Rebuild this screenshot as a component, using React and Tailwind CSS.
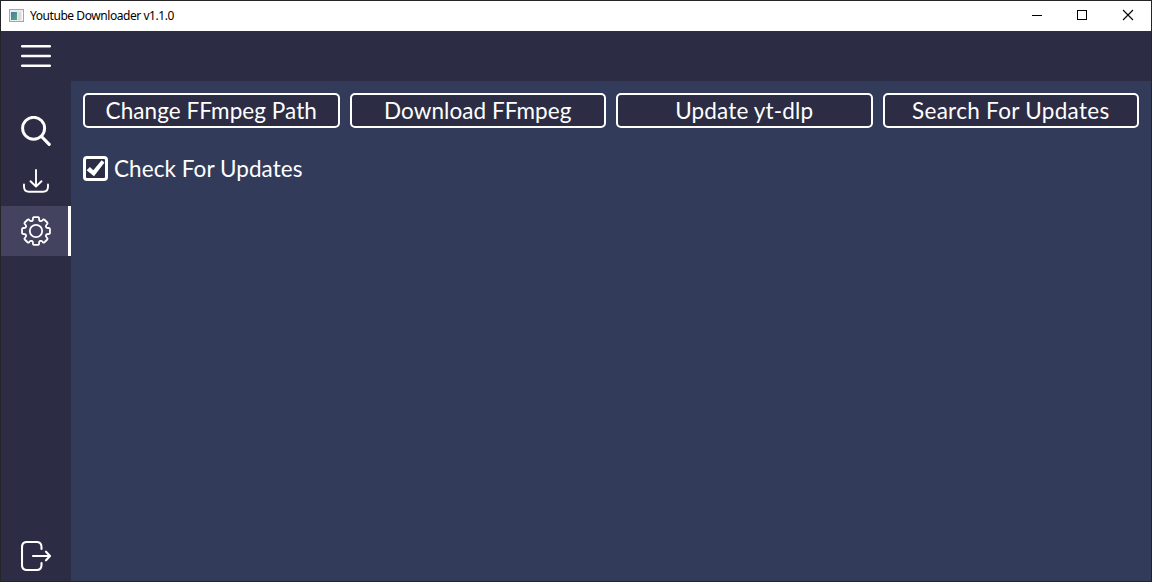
import React from "react";

const polar = (r, deg) => {
  const a = (deg * Math.PI) / 180;
  return `${(15 + r * Math.sin(a)).toFixed(2)} ${(15 - r * Math.cos(a)).toFixed(2)}`;
};

const gearPath =
  `M${polar(14.1, -8)}` +
  Array.from({ length: 8 }, (_, i) => {
    const d = i * 45;
    return `L${polar(14.1, d + 8)}Q${polar(14.2, d + 13)} ${polar(12.8, d + 13.5)}C${polar(10.2, d + 16)} ${polar(10.2, d + 29)} ${polar(12.8, d + 31.5)}Q${polar(14.2, d + 32)} ${polar(14.1, d + 37)}`;
  }).join("") +
  "Z";

function Icon({ children, width = 2 }) {
  return (
    <svg width="30" height="30" viewBox="0 0 30 30" fill="none" stroke="white" strokeWidth={width} strokeLinecap="round" strokeLinejoin="round" className="shrink-0">
      {children}
    </svg>
  );
}

function NavItem({ active, children }) {
  return (
    <button className={`flex h-[50px] w-[70px] shrink-0 items-center justify-center ${active ? "border-r-3 border-white bg-[#434360] pl-[3px]" : ""}`}>
      {children}
    </button>
  );
}

function TitleBar() {
  return (
    <header className="flex h-[30px] shrink-0 items-center bg-white text-black">
      <svg width="16" height="14" viewBox="0 0 16 14" className="ml-2 shrink-0">
        <defs>
          <linearGradient id="app" x1="0" y1="0" x2="1" y2="1">
            <stop offset="0" stopColor="#4a78ad" />
            <stop offset="1" stopColor="#55a878" />
          </linearGradient>
        </defs>
        <rect x="0.5" y="0.5" width="14" height="12" fill="#e9ecee" stroke="#a5a8ab" />
        <rect x="2" y="3" width="6" height="8" fill="url(#app)" />
        <rect x="9" y="3" width="3" height="8" fill="#d9dcdf" />
        <rect x="13" y="3" width="1" height="8" fill="#fff" />
      </svg>
      <span className="ml-[5px] font-['Noto_Sans',sans-serif] text-[12px] leading-[16px] tracking-[-0.44px] whitespace-nowrap">Youtube Downloader v1.1.0</span>
      <div className="ml-auto flex h-full">
        <svg width="46" height="30" viewBox="0 0 46 30" shapeRendering="crispEdges"><path d="M19 14.5h10" stroke="#000" /></svg>
        <svg width="46" height="30" viewBox="0 0 46 30" shapeRendering="crispEdges"><path d="M18.5 9.5h9v9h-9z" stroke="#000" fill="none" /></svg>
        <svg width="46" height="30" viewBox="0 0 46 30"><path d="M18 9l10 10m0-10l-10 10" stroke="#000" strokeWidth="1.1" /></svg>
      </div>
    </header>
  );
}

const actions = [
  { label: "Change FFmpeg Path", tracking: "tracking-[0.06px]" },
  { label: "Download FFmpeg", tracking: "tracking-[0.06px]" },
  { label: "Update yt-dlp", tracking: "tracking-[0.15px]" },
  { label: "Search For Updates", tracking: "tracking-[0.3px]" },
];

export default function App() {
  return (
    <div className="flex h-[582px] w-[1152px] flex-col overflow-hidden border border-[#242429] bg-[#2c2d44] font-['Lato',sans-serif] text-white">
      <TitleBar />
      <div className="flex h-[50px] shrink-0">
        <NavItem>
          <Icon width={2.5}><path d="M1.200 5.300h27.600M1.200 15h27.600M1.200 24.700h27.600" /></Icon>
        </NavItem>
      </div>
      <div className="flex min-h-0 flex-1">
        <nav className="flex w-[70px] shrink-0 flex-col pt-[25px]">
          <NavItem>
            <Icon width={2.9}>
              <circle cx="12.6" cy="12.3" r="11" />
              <path d="M20.5 20.5l7.700 7.800" strokeWidth="3.200" />
            </Icon>
          </NavItem>
          <NavItem>
            <Icon width={1.9}>
              <path d="M15 4v16M9.500 15.200L15 20.500l5.500-5.300M3 18.500v2.300q0 5 5 5h14q5 0 5-5v-2.300" />
            </Icon>
          </NavItem>
          <NavItem active>
            <Icon width={1.8}>
              <path d={gearPath} />
              <circle cx="15" cy="15" r="6.200" />
            </Icon>
          </NavItem>
          <div className="mt-auto">
            <NavItem>
              <Icon width={2.1}>
                <path d="M20.500 8V6q0-5-5-5H6Q1 1 1 6v18q0 5 5 5h9.500q5 0 5-5v-2M12 15h17M25 10.700L29 15l-4 4.300" />
              </Icon>
            </NavItem>
          </div>
        </nav>
        <main className="flex-1 bg-[#333b5a] px-3 pt-3">
          <div className="grid grid-cols-4 gap-[10px]">
            {actions.map(({ label, tracking }) => (
              <button key={label} className={`flex h-[35px] items-center justify-center rounded-[5px] border-2 border-white bg-[#2c2d44] pt-[2px] text-[22.5px] leading-none whitespace-nowrap ${tracking}`}>
                {label}
              </button>
            ))}
          </div>
          <label className="mt-[28px] flex h-[25px] items-center gap-[6px]">
            <span className="flex size-[25px] shrink-0 items-center justify-center rounded-[4px] border-3 border-white bg-[#2c2d44]">
              <svg width="19" height="19" viewBox="0 0 19 19"><path d="M0.600 11.200l3.300-3.200 3.400 3.300L15.600 1.200l2.900 2.300L8 17.300z" fill="white" /></svg>
            </span>
            <span className="pt-[2px] text-[22.5px] leading-none tracking-[0.06px]">Check For Updates</span>
          </label>
        </main>
      </div>
    </div>
  );
}
